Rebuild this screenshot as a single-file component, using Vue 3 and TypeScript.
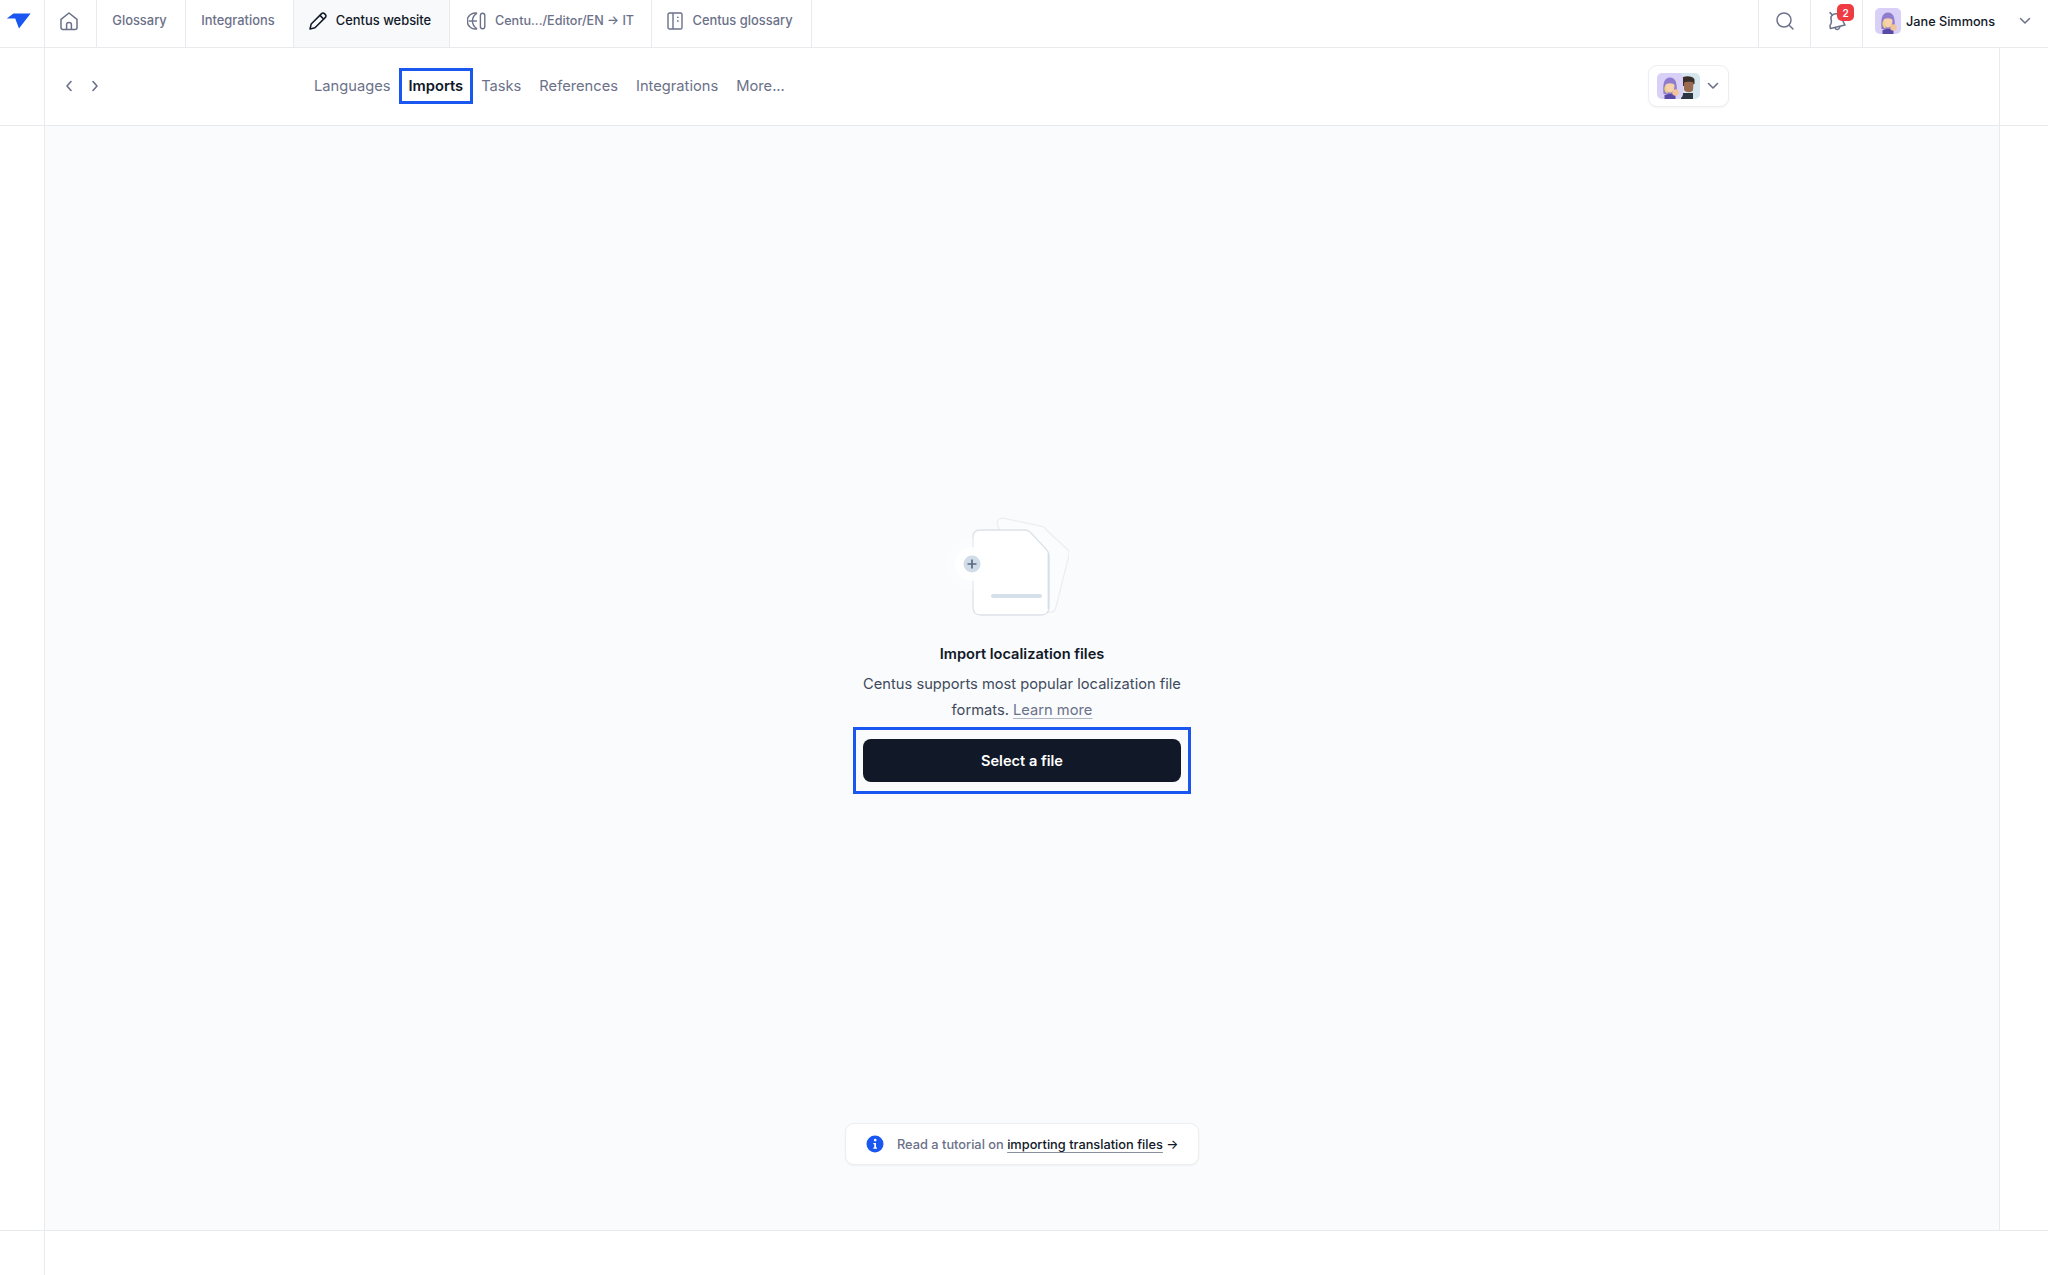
<script setup lang="ts">
const tabs = [
  { label: 'Glossary', width: 89 },
  { label: 'Integrations', width: 108 },
]
const links = ['Languages', 'Imports', 'Tasks', 'References', 'Integrations', 'More...']
</script>

<template>
  <div class="page">
    <header class="topbar">
      <div class="logo-cell">
        <svg width="26" height="18" viewBox="0 0 26 18">
          <path d="M7.4 0.6H24.6L13 15.4L9.2 5.6H0.8Z" fill="#1a56f0" />
        </svg>
      </div>
      <div class="tab home">
        <svg width="20" height="20" viewBox="0 0 20 20" fill="none" stroke="#6b7189" stroke-width="1.5" stroke-linejoin="round">
          <path d="M2 8.4L10 2L18 8.4V16.4C18 17.6 17.2 18.4 16 18.4H4C2.8 18.4 2 17.6 2 16.4Z" />
          <path d="M7.6 18.4V13.6C7.6 12.4 8.6 11.6 10 11.6C11.4 11.6 12.4 12.4 12.4 13.6V18.4" />
        </svg>
      </div>
      <div v-for="tab in tabs" :key="tab.label" class="tab" :style="{ width: tab.width + 'px' }">{{ tab.label }}</div>
      <div class="tab active">
        <svg width="18" height="18" viewBox="0 0 18 18" fill="none" stroke="#111827" stroke-width="1.5" stroke-linejoin="round">
          <path d="M1 17L2.2 12L12.6 1.6C13.4 0.8 14.6 0.8 15.4 1.6L16.4 2.6C17.2 3.4 17.2 4.6 16.4 5.4L6 15.8Z" />
          <path d="M11 3.4L14.6 7" />
        </svg>
        Centus website
      </div>
      <div class="tab editor">
        <svg width="19" height="18" viewBox="0 0 19 18" fill="none" stroke="#6b7189" stroke-width="1.4">
          <path d="M10 1.2A8 8 0 1 0 10 16.8" />
          <path d="M10 1.2C6.8 3.4 5.4 6 5.4 9C5.4 12 6.8 14.6 10 16.8" />
          <path d="M1.4 9H10" />
          <rect x="13.4" y="1.2" width="4.4" height="15.6" rx="2.2" />
        </svg>
        Centu.../Editor/EN → IT
      </div>
      <div class="tab book">
        <svg width="16" height="18" viewBox="0 0 16 18" fill="none" stroke="#6b7189" stroke-width="1.4">
          <rect x="1" y="1" width="14" height="16" rx="1.6" />
          <path d="M6 1V17" />
          <path d="M10 5.4H11.6M10 9H11.6" />
        </svg>
        Centus glossary
      </div>
      <div class="spacer"></div>
      <div class="tab icon-cell search">
        <svg width="20" height="20" viewBox="0 0 20 20" fill="none" stroke="#6b7189" stroke-width="1.5" stroke-linecap="round">
          <circle cx="9" cy="9" r="7" />
          <path d="M14.2 14.2L18 18" />
        </svg>
      </div>
      <div class="tab icon-cell bell">
        <svg width="20" height="20" viewBox="0 0 20 20" fill="none" stroke="#6b7189" stroke-width="1.5" stroke-linejoin="round" stroke-linecap="round">
          <path d="M6 3.6C9 2 12.6 3 14 6L16.6 11.4L18 14L3.4 17.6L3 14.4C4.6 12.6 4.6 10 4 7.8C3.6 6 4.6 4.4 6 3.6Z" />
          <path d="M8.2 17.2C9 19 12 19 12.8 16.4" />
          <path d="M3 1.6L5 3.6" />
        </svg>
        <span class="badge">2</span>
      </div>
      <div class="user">
        <svg class="avatar" width="26" height="26" viewBox="0 0 26 26">
          <rect width="26" height="26" rx="5" fill="#d9d0f7" />
          <path d="M6.5 21C5.500 11 7 4.500 13 4.500C19 4.500 20.500 11 19.500 21Z" fill="#8f7ccf" />
          <path d="M8.500 12.500C8.500 9.500 17.500 9.500 17.500 12.500C17.500 17 15.500 19.500 13 19.500C10.500 19.500 8.500 17 8.500 12.500Z" fill="#f6d3ab" />
          <path d="M7.500 14C7 17 8 20 11 20.500L9 12Z" fill="#efd07f" />
          <path d="M7.500 26V22C9.500 20.500 16.500 20.500 18.500 22V26Z" fill="#5a4aa8" />
          <circle cx="18.500" cy="19.500" r="3.200" fill="#f2c596" />
        </svg>
        <span class="user-name">Jane Simmons</span>
        <svg class="caret" width="12" height="8" viewBox="0 0 12 8" fill="none" stroke="#6b7189" stroke-width="1.5" stroke-linecap="round" stroke-linejoin="round">
          <path d="M1.5 1.5L6 6L10.5 1.5" />
        </svg>
      </div>
    </header>

    <div class="subbar">
      <div class="gutter left"></div>
      <div class="subbar-main">
        <div class="arrows">
          <svg width="8" height="12" viewBox="0 0 8 12" fill="none" stroke="#6b7189" stroke-width="1.6" stroke-linecap="round" stroke-linejoin="round">
            <path d="M6 1.5L2 6L6 10.5" />
          </svg>
          <svg width="8" height="12" viewBox="0 0 8 12" fill="none" stroke="#6b7189" stroke-width="1.6" stroke-linecap="round" stroke-linejoin="round">
            <path d="M2 1.5L6 6L2 10.5" />
          </svg>
        </div>
        <nav class="links">
          <a v-for="link in links" :key="link" class="link" :class="{ current: link === 'Imports' }">{{ link }}</a>
        </nav>
        <div class="people">
          <div class="people-stack">
            <svg class="face back" width="26" height="26" viewBox="0 0 26 26">
              <rect width="26" height="26" rx="5" fill="#d5e6ee" />
              <path d="M7 14V6C8 2.500 19 2 20.500 6.500V11L12 12Z" fill="#3a2e2a" />
              <path d="M10 9.500C12 8.500 18 8.500 19.500 9.500L19 17C18 20 12 20 10 17Z" fill="#9a6a50" />
              <path d="M7 26V20H19V26Z" fill="#2c3542" />
            </svg>
            <svg class="face" width="26" height="26" viewBox="0 0 26 26">
              <rect width="26" height="26" rx="5" fill="#d9d0f7" />
              <path d="M6.500 21C5.500 11 7 4.500 13 4.500C19 4.500 20.500 11 19.500 21Z" fill="#8f7ccf" />
              <path d="M8.500 12.500C8.500 9.500 17.500 9.500 17.500 12.500C17.500 17 15.500 19.500 13 19.500C10.500 19.500 8.500 17 8.500 12.500Z" fill="#f6d3ab" />
              <path d="M7.500 14C7 17 8 20 11 20.500L9 12Z" fill="#efd07f" />
              <path d="M7.500 26V22C9.500 20.500 16.500 20.500 18.500 22V26Z" fill="#5a4aa8" />
              <circle cx="18.500" cy="19.500" r="3.200" fill="#f2c596" />
            </svg>
          </div>
          <svg width="12" height="8" viewBox="0 0 12 8" fill="none" stroke="#6b7189" stroke-width="1.6" stroke-linecap="round" stroke-linejoin="round">
            <path d="M1.5 1.5L6 6L10.5 1.5" />
          </svg>
        </div>
      </div>
      <div class="gutter right"></div>
    </div>

    <div class="middle">
      <div class="gutter left"></div>
      <main class="content">
        <div class="empty">
          <svg class="art" width="124" height="106" viewBox="0 0 124 106" fill="none">
            <path d="M52 12C52.600 8.500 55 6.600 59 7.400L97 15.400C99 16 100.400 17 101.400 19L124 40V44L111 96C110 100 107 102 103 101L80 96Z" fill="#fbfcfd" stroke="#eceef2" stroke-width="1.300" />
            <path d="M28 26C28 21 31 19 35 19H80C82 19 84 20 85 21L101 38C103 40 104 42 104 45V96C104 101 101 104 96 104H36C31 104 28 101 28 96Z" fill="#fff" stroke="#dde2e9" stroke-width="1.300" />
            <path d="M103.400 42V98" stroke="#d5dfe9" stroke-width="1.600" />
            <rect x="46" y="83" width="51" height="4" rx="2" fill="#d6e0ea" />
            <circle cx="27" cy="53" r="26" fill="#fff" fill-opacity="0.25" />
            <circle cx="27" cy="53" r="17" fill="#fff" fill-opacity="0.9" />
            <circle cx="27" cy="53" r="8.500" fill="#d0dce8" />
            <path d="M27 48.500V57.500M22.500 53H31.500" stroke="#5b6a80" stroke-width="1.700" />
          </svg>
          <h1 class="title">Import localization files</h1>
          <p class="desc">Centus supports most popular localization file formats. <a class="learn">Learn more</a></p>
          <div class="focus-frame">
            <button class="select-btn">Select a file</button>
          </div>
        </div>
        <div class="tip">
          <svg width="18" height="18" viewBox="0 0 18 18">
            <circle cx="9" cy="9" r="8.500" fill="#1a56f0" />
            <circle cx="9.200" cy="5.100" r="1.300" fill="#fff" />
            <path d="M7.300 7.900H10V12.400H11V13.700H7.300V12.400H8.300V9.200H7.300Z" fill="#fff" />
          </svg>
          <span class="tip-text">Read a tutorial on <a class="tip-link">importing translation files</a> <span class="tip-arrow">→</span></span>
        </div>
      </main>
      <div class="gutter right"></div>
    </div>

    <div class="footer">
      <div class="gutter left"></div>
      <div class="footer-main"></div>
      <div class="gutter right noborder"></div>
    </div>
  </div>
</template>

<style>
html,
body {
  margin: 0;
  background: #fff;
}
</style>

<style scoped>
.page {
  width: 2048px;
  height: 1275px;
  display: flex;
  flex-direction: column;
  overflow: hidden;
  font-family: Inter, 'Liberation Sans', sans-serif;
  color: #111827;
  background: #fff;
}

.topbar {
  height: 47px;
  flex: none;
  display: flex;
  border-bottom: 1px solid #e8eaee;
}

.logo-cell {
  width: 45px;
  flex: none;
  box-sizing: border-box;
  padding: 13px 0 0 6px;
  border-right: 1px solid #e8eaee;
}

.tab {
  box-sizing: border-box;
  flex: none;
  display: flex;
  align-items: center;
  justify-content: center;
  gap: 9px;
  padding: 0 3px 6px 0;
  border-right: 1px solid #e8eaee;
  font-size: 12.9px;
  font-weight: 500;
  color: #6b7189;
}

.home {
  width: 52px;
}

.active {
  width: 156px;
  background: #f7f9fb;
  color: #111827;
}

.editor {
  width: 202px;
  font-size: 12.6px;
  padding-right: 0;
}

.book {
  width: 160px;
}

.spacer {
  flex: 1;
}

.icon-cell {
  width: 52px;
  border-right: 1px solid #e8eaee;
  padding-right: 0;
}

.search {
  border-left: 1px solid #e8eaee;
  width: 53px;
}

.bell {
  position: relative;
}

.badge {
  position: absolute;
  left: 26px;
  top: 4px;
  width: 17px;
  height: 17px;
  border-radius: 5px;
  background: #ef3b42;
  color: #fff;
  font-size: 10px;
  font-weight: 600;
  display: flex;
  align-items: center;
  justify-content: center;
}

.user {
  width: 185px;
  flex: none;
  display: flex;
  align-items: center;
  padding: 0 0 5px 12px;
  box-sizing: border-box;
}

.avatar {
  flex: none;
  margin-right: 5px;
}

.user-name {
  font-size: 12.7px;
  font-weight: 500;
  color: #111827;
}

.caret {
  margin-left: auto;
  margin-right: 17px;
}

.subbar {
  height: 77px;
  flex: none;
  display: flex;
  border-bottom: 1px solid #e8eaee;
}

.gutter {
  flex: none;
  box-sizing: border-box;
}

.gutter.left {
  width: 45px;
  border-right: 1px solid #e8eaee;
}

.gutter.right {
  width: 49px;
  border-left: 1px solid #e8eaee;
}

.subbar-main {
  flex: 1;
  display: flex;
  align-items: center;
  padding-bottom: 2px;
}

.arrows {
  display: flex;
  gap: 18px;
  margin-left: 20px;
}

.links {
  display: flex;
  align-items: center;
  margin-left: 206px;
}

.link {
  font-size: 14.7px;
  color: #6b7189;
  padding: 0 9px;
}

.link.current {
  color: #111827;
  font-weight: 600;
  padding: 6px 7px;
  border: 3px solid #1a56f0;
  line-height: 18px;
  margin: 0 -1px;
}

.people {
  margin-left: auto;
  margin-right: 270px;
  width: 81px;
  height: 42px;
  box-sizing: border-box;
  display: flex;
  align-items: center;
  padding-left: 8px;
  gap: 7px;
  background: #fff;
  border: 1px solid #eceef1;
  border-radius: 9px;
  box-shadow: 0 1px 2px rgba(17, 24, 39, 0.05);
}

.people-stack {
  position: relative;
  width: 43px;
  height: 26px;
}

.face {
  position: absolute;
  left: 0;
  top: 0;
}

.face.back {
  left: 17px;
}

.middle {
  flex: 1;
  display: flex;
  min-height: 0;
  border-bottom: 1px solid #e8eaee;
}

.content {
  flex: 1;
  background: #f9fbfd;
  display: flex;
  flex-direction: column;
  align-items: center;
}

.empty {
  margin-top: 385px;
  width: 340px;
  display: flex;
  flex-direction: column;
  align-items: center;
}

.art {
  display: block;
  margin-left: -30px;
}

.title {
  margin: 26px 0 0;
  font-size: 14.6px;
  line-height: 22px;
  font-weight: 600;
  color: #111827;
}

.desc {
  margin: 6px 0 0;
  width: 330px;
  text-align: center;
  font-size: 14.7px;
  line-height: 26px;
  color: #414a5c;
}

.learn {
  color: #6b7189;
  text-decoration: underline;
  text-underline-offset: 3px;
  text-decoration-color: #b0b5c2;
}

.focus-frame {
  box-sizing: border-box;
  width: 338px;
  height: 67px;
  margin-top: 4px;
  border: 3px solid #1a56f0;
  display: flex;
  align-items: center;
  justify-content: center;
}

.select-btn {
  width: 318px;
  height: 43px;
  border: 0;
  border-radius: 8px;
  background: #111827;
  color: #fff;
  font-family: inherit;
  font-size: 14.6px;
  font-weight: 600;
}

.tip {
  margin-top: auto;
  margin-bottom: 65px;
  box-sizing: border-box;
  width: 354px;
  height: 42px;
  display: flex;
  align-items: center;
  gap: 13px;
  padding-left: 20px;
  background: #fff;
  border: 1px solid #eceef1;
  border-radius: 9px;
  box-shadow: 0 1px 2px rgba(17, 24, 39, 0.05);
}

.tip-text {
  font-size: 12.8px;
  font-weight: 500;
  color: #6b7189;
}

.tip-link {
  color: #111827;
  text-decoration: underline;
  text-underline-offset: 3px;
  text-decoration-color: #8b90a0;
}

.tip-arrow {
  color: #111827;
}

.footer {
  flex: none;
  height: 44px;
  display: flex;
}

.footer-main {
  flex: 1;
}

.gutter.noborder {
  border-left: 0;
}
</style>
